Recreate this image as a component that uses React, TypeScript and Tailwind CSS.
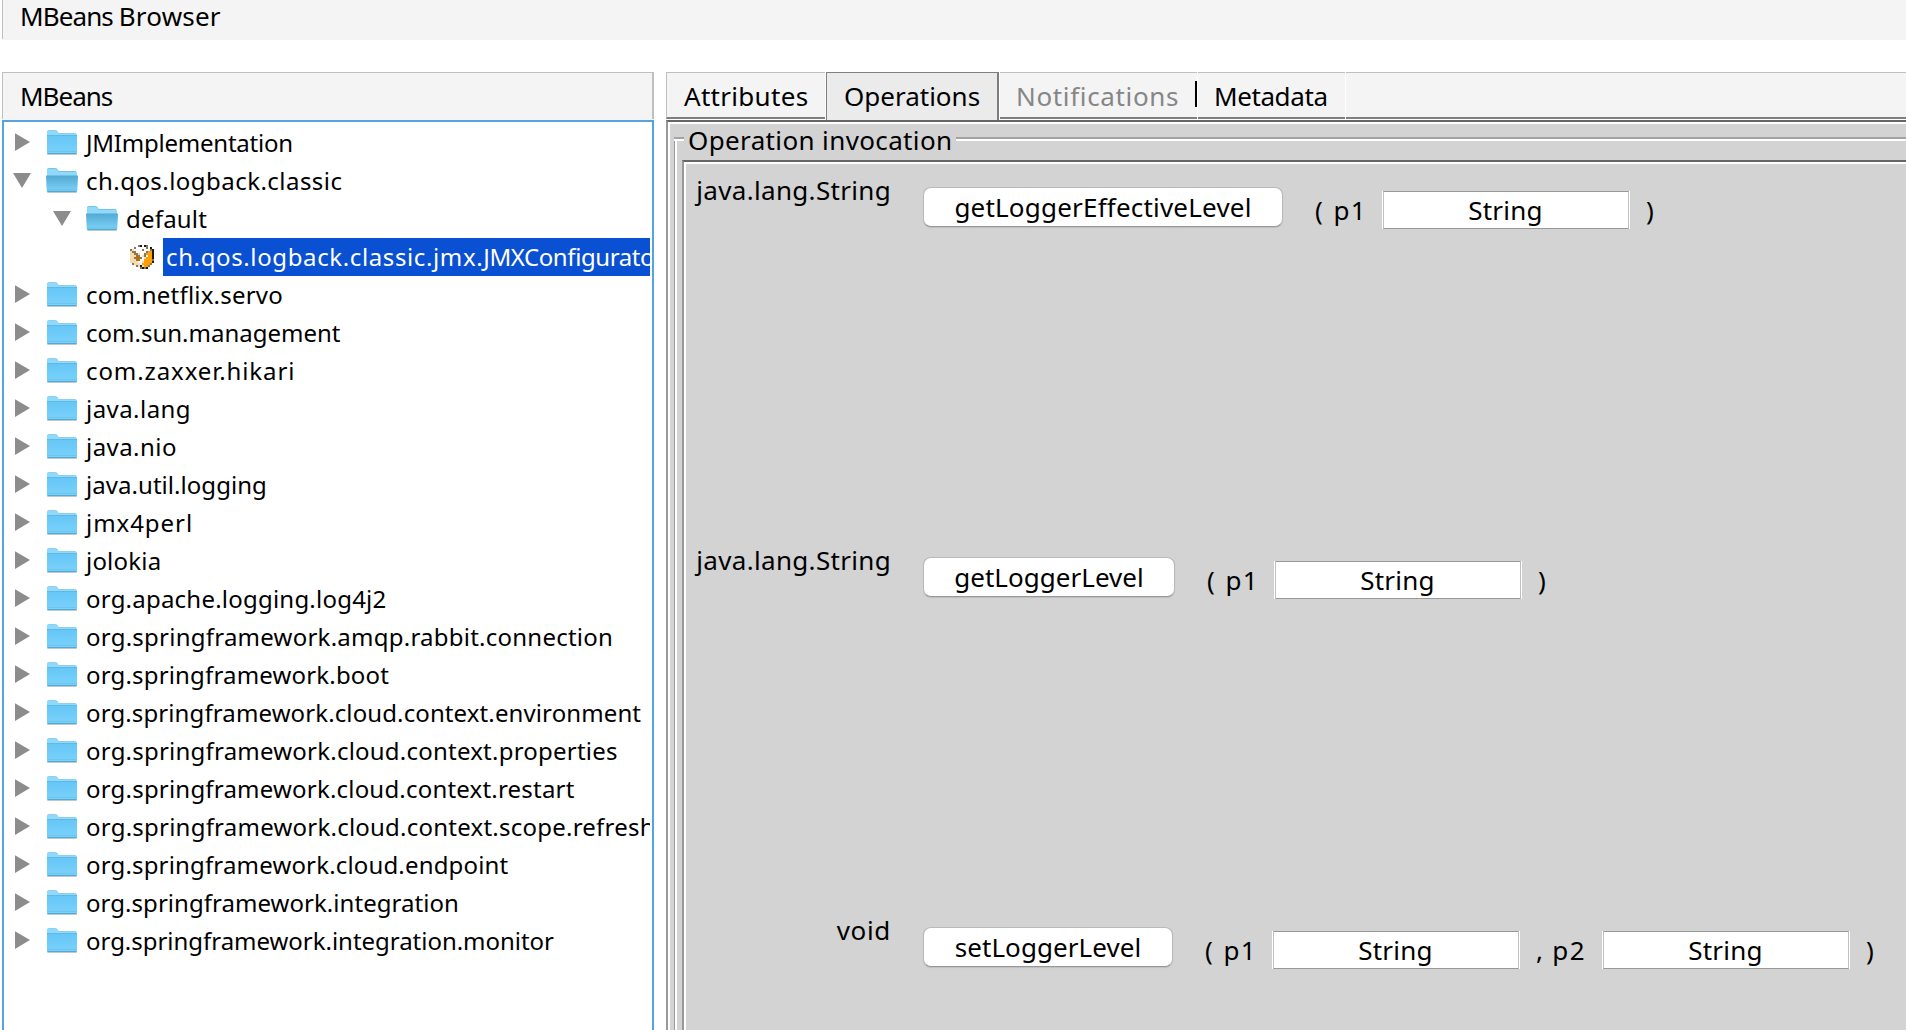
import React from "react";

type Row = { parts: [string, string][]; depth: 0 | 1 | 2; open?: boolean; selected?: boolean };

const rows: Row[] = [
  { parts: [["JMImplementation", "tracking-[-0.23px]"]], depth: 0 },
  { parts: [["ch.qos.logback.classic", "tracking-[0.46px]"]], depth: 0, open: true },
  { parts: [["default", "tracking-[0.2px]"]], depth: 1, open: true },
  {
    parts: [
      ["ch.qos.logback.classic.jmx.", "tracking-[0.62px]"],
      ["JMXConfigurator", "tracking-[-0.4px]"],
    ],
    depth: 2,
    selected: true,
  },
  { parts: [["com.netflix.servo", "tracking-[0.21px]"]], depth: 0 },
  { parts: [["com.sun.management", "tracking-normal"]], depth: 0 },
  { parts: [["com.zaxxer.hikari", "tracking-[0.9px]"]], depth: 0 },
  { parts: [["java.lang", "tracking-[0.45px]"]], depth: 0 },
  { parts: [["java.nio", "tracking-[0.45px]"]], depth: 0 },
  { parts: [["java.util.logging", "tracking-[0.05px]"]], depth: 0 },
  { parts: [["jmx4perl", "tracking-[0.95px]"]], depth: 0 },
  { parts: [["jolokia", "tracking-[0.2px]"]], depth: 0 },
  { parts: [["org.apache.logging.log4j2", "tracking-[0.22px]"]], depth: 0 },
  { parts: [["org.springframework.amqp.rabbit.connection", "tracking-[0.24px]"]], depth: 0 },
  { parts: [["org.springframework.boot", "tracking-[0.17px]"]], depth: 0 },
  { parts: [["org.springframework.cloud.context.environment", "tracking-[0.11px]"]], depth: 0 },
  { parts: [["org.springframework.cloud.context.properties", "tracking-[0.22px]"]], depth: 0 },
  { parts: [["org.springframework.cloud.context.restart", "tracking-[0.2px]"]], depth: 0 },
  { parts: [["org.springframework.cloud.context.scope.refresh", "tracking-[0.23px]"]], depth: 0 },
  { parts: [["org.springframework.cloud.endpoint", "tracking-[0.16px]"]], depth: 0 },
  { parts: [["org.springframework.integration", "tracking-[0.04px]"]], depth: 0 },
  { parts: [["org.springframework.integration.monitor", "tracking-[-0.03px]"]], depth: 0 },
];

const indent = ["pl-[9px]", "pl-[49px]", "pl-[89px]"];

function Arrow({ open }: { open?: boolean }) {
  return (
    <svg width="20" height="38" viewBox="0 0 20 38" className="shrink-0">
      <path d={open ? "M2 11H20L11 26Z" : "M4 9.2V27L19 18Z"} fill="#8c8c8c" transform="translate(-2 0)" />
    </svg>
  );
}

function Folder({ open }: { open?: boolean }) {
  return (
    <svg width="34" height="38" viewBox="0 0 34 38" className="shrink-0">
      <defs>
        <linearGradient id="folderClosed" x1="0" y1="0" x2="0" y2="1">
          <stop offset="0" stopColor="#65c6f6" />
          <stop offset="1" stopColor="#7bd2fb" />
        </linearGradient>
        <linearGradient id="folderOpen" x1="0" y1="0" x2="0" y2="1">
          <stop offset="0" stopColor="#52a9d1" />
          <stop offset="1" stopColor="#7fd4fb" />
        </linearGradient>
      </defs>
      <rect x="2" y="29" width="30" height="2" rx="1" fill="#d4d4d4" />
      {open ? (
        <>
          <path d="M2 16V8Q2 6.500 3.500 6.500H10.500Q12 6.500 12.500 8L13.500 9.500H30.500Q32 9.500 32 11V16Z" fill="#91d9fc" />
          <path d="M2.500 7.500Q2.500 6.500 3.500 6.500H10.500Q12 6.500 12.500 8L13.500 9.500H31" fill="none" stroke="#6bbfe4" strokeWidth="0.900" />
          <path d="M1 14Q1 13.500 1.600 13.500H32.400Q33 13.500 33 14L32.300 28.500Q32.200 30 31 30H3Q1.800 30 1.700 28.500Z" fill="url(#folderOpen)" />
          <path d="M2 28H32" stroke="#67b9de" strokeWidth="0.800" />
          <path d="M2.500 29.700H31.500" stroke="#4c9fc5" strokeWidth="1" />
        </>
      ) : (
        <>
          <path d="M2 29V8Q2 6.500 3.500 6.500H10.500Q12 6.500 12.500 8L13.500 9.500H30.500Q32 9.500 32 11V28.500Q32 30 30.500 30H3.500Q2 30 2 28.500Z" fill="#8fd9fd" />
          <path d="M2.500 7.500Q2.500 6.500 3.500 6.500H10.500Q12 6.500 12.500 8L13.500 9.500H31" fill="none" stroke="#7cc9ec" strokeWidth="0.800" />
          <path d="M2 11.500H32V28.500Q32 30 30.500 30H3.500Q2 30 2 28.500Z" fill="url(#folderClosed)" />
          <path d="M2 11.500H32" stroke="#5cb7e0" strokeWidth="0.900" />
          <path d="M2 27.500H32" stroke="#6cc3ea" strokeWidth="0.800" />
          <path d="M2.500 29.700H31.500" stroke="#4a9fc6" strokeWidth="1" />
        </>
      )}
    </svg>
  );
}

const beanPixels = [
  "....bkwkb...",
  "..bwwwwwbwk.",
  "btwwwwbwwwbk",
  "tbbwwwwwbook",
  "ttbbtwwboook",
  "tttdbwtbwook",
  "ttbddbwtoook",
  "tttddwwoooob",
  "ttttwwtooook",
  ".btttwoooob.",
  "...btktoob..",
  ".....bkbk...",
];
const beanColors: Record<string, string> = {
  k: "#1c1a18",
  b: "#8d7555",
  w: "#ffffff",
  t: "#f8dab2",
  o: "#ffa000",
  d: "#b56f08",
};

function Bean() {
  return (
    <svg width="24" height="24" viewBox="0 0 12 12" shapeRendering="crispEdges" className="mr-[9px] shrink-0">
      {beanPixels.flatMap((line, y) =>
        line.split("").map((c, x) =>
          c === "." ? null : <rect key={`${x}-${y}`} x={x} y={y} width="1" height="1" fill={beanColors[c]} />
        )
      )}
    </svg>
  );
}

function TreeRow({ row }: { row: Row }) {
  const text = row.parts.map(([s, track]) => (
    <span key={s} className={track}>{s}</span>
  ));
  return (
    <div className={`flex h-[38px] items-center whitespace-nowrap leading-[38px] ${indent[row.depth]}`}>
      {row.selected ? (
        <>
          <span className="w-[37px] shrink-0" />
          <Bean />
          <span className="min-w-0 flex-1 overflow-hidden bg-[#0a50d2] pl-[3px] text-white">{text}</span>
        </>
      ) : (
        <>
          <Arrow open={row.open} />
          <span className="w-3 shrink-0" />
          <Folder open={row.open} />
          <span className="pl-[7px]">{text}</span>
        </>
      )}
    </div>
  );
}

function Field() {
  return (
    <div className="h-[38px] w-[248px] shrink-0 border-x border-white">
      <div className="h-full border border-x-[#c0c0c0] border-y-[#999999] bg-white pr-px text-center leading-9 tracking-[0.2px]">
        String
      </div>
    </div>
  );
}

type Op = { ret: string; retTrack: string; name: string; nameTrack: string; width: string; second?: boolean };

const ops: Op[] = [
  { ret: "java.lang.String", retTrack: "tracking-[0.32px]", name: "getLoggerEffectiveLevel", nameTrack: "tracking-[0.2px]", width: "w-[360px]" },
  { ret: "java.lang.String", retTrack: "tracking-[0.32px]", name: "getLoggerLevel", nameTrack: "tracking-[0.03px]", width: "w-[252px]" },
  { ret: "void", retTrack: "tracking-[0.65px]", name: "setLoggerLevel", nameTrack: "tracking-[0.07px]", width: "w-[250px]", second: true },
];

function Operation({ op }: { op: Op }) {
  return (
    <div className="flex h-[370px] shrink-0 items-start whitespace-nowrap leading-9">
      <div className={`mt-2 w-[205px] text-right ${op.retTrack}`}>{op.ret}</div>
      <button
        className={`ml-8 mt-[23px] h-10 shrink-0 rounded-[8px] border border-[#b9b9b9] border-b-[#989898] bg-white text-center leading-[35px] shadow-[0_1px_1px_#bdbdbd] ${op.width} ${op.nameTrack}`}
      >
        {op.name}
      </button>
      <div className="mt-7 w-[99px] shrink-0 pl-8">
        <span className="tracking-[2px]">( </span>
        <span className="tracking-[1.2px]">p1</span>
      </div>
      <div className="mt-[27px]"><Field /></div>
      {op.second && (
        <>
          <div className="mt-7 w-[82px] shrink-0 pl-4">
            <span className="tracking-[1.2px]">, </span>
            <span className="tracking-[1.6px]">p2</span>
          </div>
          <div className="mt-[27px]"><Field /></div>
        </>
      )}
      <div className="mt-7 pl-4">)</div>
    </div>
  );
}

function Tab({ children, className }: { children: React.ReactNode; className: string }) {
  return (
    <div className={`h-[47px] shrink-0 whitespace-nowrap border-t border-t-[#bfbfbf] bg-[#f4f4f4] pt-[5px] leading-9 ${className}`}>
      {children}
    </div>
  );
}

export default function App() {
  return (
    <div className="flex h-[1030px] w-[1906px] flex-col overflow-hidden bg-white font-['Noto_Sans',sans-serif] text-[26px] text-black">
      <header className="ml-[2px] h-10 shrink-0 bg-[#f4f4f4]">
        <div className="h-[39px] border-l border-[#bfbfbf] pl-[17px] leading-8">
          <span className="tracking-[-0.9px]">MBeans </span>
          <span className="tracking-[0.2px]">Browser</span>
        </div>
      </header>

      <main className="flex min-h-0 flex-1 pt-8">
        <section className="ml-[2px] flex w-[652px] shrink-0 flex-col">
          <div className="h-12 bg-[#f4f4f4]">
            <div className="h-[47px] border border-b-0 border-r-2 border-[#bfbfbf] pl-[17px] pt-[5px] leading-9 tracking-[-1px]">
              MBeans
            </div>
          </div>
          <div className="flex-1 overflow-hidden border-2 border-b-0 border-[#55a3e3] pr-[2px] pt-[2px] text-2xl">
            <div className="overflow-hidden">
              {rows.map((r) => (
                <TreeRow key={r.parts[0][0]} row={r} />
              ))}
            </div>
          </div>
        </section>

        <section className="ml-3 flex min-w-0 flex-1 flex-col">
          <div className="flex h-12 shrink-0">
            <Tab className="w-[159px] border-b-2 border-l border-b-[#7f7f7f] border-l-[#bfbfbf] pl-[17px] tracking-[0.3px]">
              Attributes
            </Tab>
            <div className="ml-px h-12 w-[173px] shrink-0 border border-b-0 border-r-2 border-[#7f7f7f] bg-[#ebebeb] pl-[17px] pt-[5px] leading-9">
              Operations
            </div>
            <Tab className="ml-px flex w-[197px] border-b-2 border-b-[#7f7f7f] pl-4 text-[#868686]">
              <span className="w-[179px] tracking-[0.65px]">Notifications</span>
              <span className="mt-[3px] h-[26px] w-[2px] bg-black" />
            </Tab>
            <Tab className="ml-px w-[147px] border-b-2 border-b-[#7f7f7f] pl-4 tracking-[-0.4px]">Metadata</Tab>
            <Tab className="ml-px flex-1 border-b-2 border-b-[#7f7f7f]">{null}</Tab>
          </div>

          <div className="min-h-0 flex-1 border-l-2 border-t-2 border-l-[#999999] border-t-[#666666]">
            <div className="h-full border-l-2 border-t-2 border-white bg-[#d3d3d3] pl-1 pt-[13px]">
              <div className="h-full border-l border-[#999999]">
                <div className="h-full border-l-2 border-white">
                  <div className="-ml-[3px] flex h-[23px]">
                    <div className="h-1 w-[10px] shrink-0 border-y-2 border-b-white border-t-[#a3a3a3]" />
                    <div className="-mt-[15px] w-[272px] shrink-0 whitespace-nowrap pl-1 leading-9 tracking-[0.37px]">
                      Operation invocation
                    </div>
                    <div className="h-1 flex-1 border-y-2 border-b-white border-t-[#a3a3a3]" />
                  </div>
                  <div className="ml-[5px] h-full border-l-2 border-t-2 border-l-[#999999] border-t-[#666666]">
                    <div className="h-full border-l-2 border-t-2 border-white">
                      {ops.map((op) => (
                        <Operation key={op.name} op={op} />
                      ))}
                    </div>
                  </div>
                </div>
              </div>
            </div>
          </div>
        </section>
      </main>
    </div>
  );
}
